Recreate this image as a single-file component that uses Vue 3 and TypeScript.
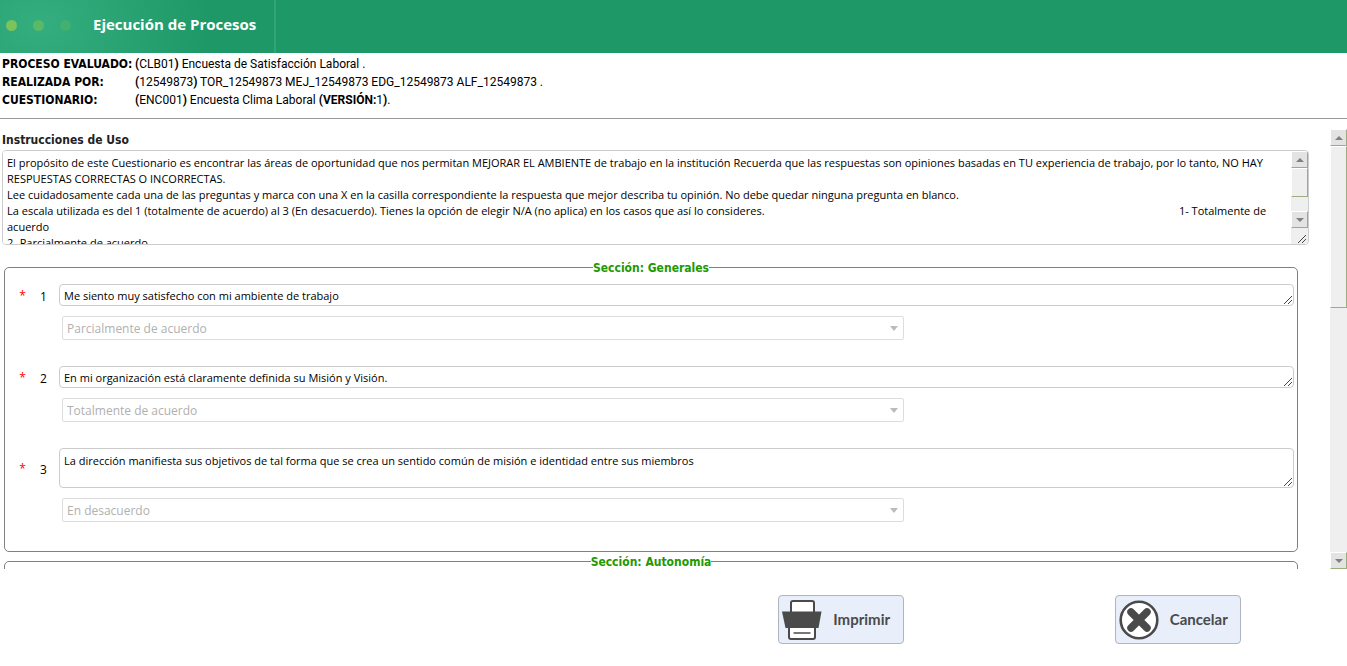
<script setup lang="ts">
import { ref } from 'vue'

interface Question {
  id: number
  text: string
  answer: string
  tall?: boolean
}

const options: string[] = ['Totalmente de acuerdo', 'Parcialmente de acuerdo', 'En desacuerdo', 'N/A']

const instructions: string =
  'El propósito de este Cuestionario es encontrar las áreas de oportunidad que nos permitan MEJORAR EL AMBIENTE de trabajo en la institución Recuerda que las respuestas son opiniones basadas en TU experiencia de trabajo, por lo tanto, NO HAY RESPUESTAS CORRECTAS O INCORRECTAS.\n' +
  'Lee cuidadosamente cada una de las preguntas y marca con una X en la casilla correspondiente la respuesta que mejor describa tu opinión. No debe quedar ninguna pregunta en blanco.\n' +
  'La escala utilizada es del 1 (totalmente de acuerdo) al 3 (En desacuerdo). Tienes la opción de elegir N/A (no aplica) en los casos que así lo consideres.' +
  ' '.repeat(145) +
  '1- Totalmente de acuerdo\n2- Parcialmente de acuerdo\n3- En desacuerdo'

const questions = ref<Question[]>([
  { id: 1, text: 'Me siento muy satisfecho con mi ambiente de trabajo', answer: 'Parcialmente de acuerdo' },
  { id: 2, text: 'En mi organización está claramente definida su Misión y Visión.', answer: 'Totalmente de acuerdo' },
  {
    id: 3,
    text: 'La dirección manifiesta sus objetivos de tal forma que se crea un sentido común de misión e identidad entre sus miembros',
    answer: 'En desacuerdo',
    tall: true,
  },
])
</script>

<template>
  <div class="page">
    <header class="banner">
      <div class="banner-title">
        <span class="dot"></span>
        <span class="dot dim"></span>
        <span class="dot faint"></span>
        <h1>Ejecución de Procesos</h1>
      </div>
    </header>

    <table class="info">
      <tbody>
        <tr>
          <th scope="row">PROCESO EVALUADO:</th>
          <td><b>(</b>CLB01<b>)</b> Encuesta de Satisfacción Laboral .</td>
        </tr>
        <tr>
          <th scope="row">REALIZADA POR:</th>
          <td><b>(</b>12549873<b>)</b> TOR_12549873 MEJ_12549873 EDG_12549873 ALF_12549873 .</td>
        </tr>
        <tr>
          <th scope="row">CUESTIONARIO:</th>
          <td><b>(</b>ENC001<b>)</b> Encuesta Clima Laboral <b>(VERSIÓN:</b>1<b>)</b>.</td>
        </tr>
      </tbody>
    </table>
    <hr class="rule" />

    <main class="survey">
      <div class="content">
        <label class="heading" for="instructions">Instrucciones de Uso</label>
        <div class="instructions">
          <textarea id="instructions" readonly :value="instructions"></textarea>
          <div class="scrollbar" aria-hidden="true">
            <span class="arrow"><svg viewBox="0 0 8 4"><path d="M0 4 4 0l4 4z" /></svg></span>
            <span class="track"><span class="thumb inner-thumb"></span></span>
            <span class="arrow"><svg viewBox="0 0 8 4"><path d="M0 0h8L4 4z" /></svg></span>
            <svg class="grip" viewBox="0 0 16 16"><path d="M7 15l8-8M11 15l4-4" /></svg>
          </div>
        </div>

        <fieldset class="section">
          <legend>Sección: Generales</legend>
          <div v-for="q in questions" :key="q.id" class="question">
            <span class="required">*</span>
            <label class="number" :for="'question-' + q.id">{{ q.id }}</label>
            <div class="field">
              <textarea :id="'question-' + q.id" :class="{ tall: q.tall }" readonly :value="q.text"></textarea>
              <svg class="grip" viewBox="0 0 16 16"><path d="M7 15l8-8M11 15l4-4" /></svg>
            </div>
            <div class="answer">
              <select v-model="q.answer" :aria-label="'Respuesta ' + q.id" disabled>
                <option v-for="o in options" :key="o">{{ o }}</option>
              </select>
              <svg class="caret" viewBox="0 0 8 5"><path d="M0 0h8L4 5z" /></svg>
            </div>
          </div>
        </fieldset>

        <fieldset class="section">
          <legend>Sección: Autonomía</legend>
        </fieldset>
      </div>

      <div class="scrollbar" aria-hidden="true">
        <span class="arrow"><svg viewBox="0 0 8 4"><path d="M0 4 4 0l4 4z" /></svg></span>
        <span class="track"><span class="thumb outer-thumb"></span></span>
        <span class="arrow"><svg viewBox="0 0 8 4"><path d="M0 0h8L4 4z" /></svg></span>
      </div>
    </main>

    <footer class="actions">
      <button type="button" class="print">
        <svg viewBox="0 0 40 40">
          <rect x="9" y="1" width="23" height="16" rx="2" fill="#fff" stroke="#4a4a4a" stroke-width="2" />
          <path d="M7 26h26v11a2 2 0 0 1-2 2H9a2 2 0 0 1-2-2z" fill="#fff" stroke="#4a4a4a" stroke-width="2" />
          <path d="M0 11.500h39.500l-3 16.500H3.500z" fill="#4a4a4a" />
          <path d="M11.500 33h17" stroke="#4a4a4a" stroke-width="1.500" />
        </svg>
        <span>Imprimir</span>
      </button>
      <button type="button" class="cancel">
        <svg viewBox="0 0 40 40">
          <circle cx="20" cy="20" r="18.300" fill="#fff" stroke="#4a4a4a" stroke-width="2.600" />
          <path d="M12 12l16 16M28 12L12 28" stroke="#4a4a4a" stroke-width="7.500" stroke-linecap="round" />
        </svg>
        <span>Cancelar</span>
      </button>
    </footer>
  </div>
</template>

<style>
body {
  margin: 0;
  background: #fff;
}
</style>

<style scoped>
.page {
  display: flex;
  flex-direction: column;
  min-height: 100vh;
  font-family: 'Open Sans', 'Noto Sans', sans-serif;
  font-size: 12px;
  color: #000;
}
.page * {
  box-sizing: border-box;
}

.banner {
  flex: none;
  background: #1f9868;
}
.banner-title {
  display: flex;
  align-items: center;
  gap: 16px;
  width: 276px;
  height: 53px;
  padding: 0 0 2px 6px;
  border-right: 2px solid #31a478;
  background: radial-gradient(ellipse 170px 130px at 40px 24px, #35ae7f, #1f9868);
}
.dot {
  width: 11px;
  height: 11px;
  border-radius: 50%;
  background: #7cc35a;
}
.dim {
  background: #58b969;
}
.faint {
  background: #41b070;
}
h1 {
  margin: 0 0 4px 6px;
  font-size: 15px;
  line-height: 20px;
  font-weight: 700;
  color: #fff;
  white-space: nowrap;
}

.info {
  flex: none;
  align-self: flex-start;
  margin-top: 2px;
  border-collapse: collapse;
  font-size: 12px;
  line-height: 18px;
}
.info th {
  width: 135px;
  padding: 0 0 0 2px;
  font-family: 'DejaVu Sans Condensed', 'DejaVu Sans', sans-serif;
  text-align: left;
  white-space: nowrap;
}
.info td {
  padding: 0;
  font-family: Roboto, sans-serif;
}
.rule {
  flex: none;
  width: 100%;
  margin: 9px 0 10px;
  border: 0;
  border-top: 1px solid #999;
}

.survey {
  flex: none;
  display: flex;
  height: 440px;
}
.content {
  flex: 1;
  min-width: 0;
  overflow: hidden;
}
.heading {
  display: block;
  padding: 2px 0 1px 2px;
  font-family: 'DejaVu Sans Condensed', 'DejaVu Sans', sans-serif;
  font-weight: 700;
  line-height: 18px;
  color: #222;
}
.instructions {
  display: flex;
  height: 95px;
  margin: 0 21px 13px 2px;
  border: 1px solid #ccc;
  border-radius: 4px;
  overflow: hidden;
}
textarea {
  display: block;
  border: 0;
  margin: 0;
  padding: 4px;
  background: #fff;
  font-family: inherit;
  font-size: 11px;
  line-height: 16px;
  color: #000;
  resize: none;
  outline: 0;
  overflow: hidden;
}
.instructions textarea {
  flex: 1;
  min-width: 0;
}

.scrollbar {
  flex: none;
  display: flex;
  flex-direction: column;
  width: 17px;
  background: #efefef;
}
.arrow {
  flex: none;
  display: flex;
  align-items: center;
  justify-content: center;
  height: 17px;
  border: 1px solid #fff;
  border-right-color: #9cab80;
  border-bottom-color: #9cab80;
  background: #e3e3e3;
}
.arrow svg {
  width: 8px;
  height: 4px;
  fill: #808080;
}
.track {
  flex: 1;
}
.thumb {
  display: block;
  border: 1px solid #fff;
  border-right-color: #9cab80;
  border-bottom-color: #9cab80;
}
.inner-thumb {
  height: 68%;
}
.outer-thumb {
  height: 40%;
}
.grip {
  display: block;
  width: 16px;
  height: 16px;
  fill: none;
  stroke: #444;
  stroke-width: 1;
}

.section {
  min-width: 0;
  margin: 0 32px 0 4px;
  padding: 7px 3px 3px;
  border: 1px solid #808080;
  border-radius: 5px;
}
.section legend {
  margin: 0 auto;
  padding: 2px 0 0;
  font-family: 'DejaVu Sans Condensed', 'DejaVu Sans', sans-serif;
  font-size: 12px;
  line-height: 17px;
  font-weight: 700;
  color: #229900;
}
.question {
  display: grid;
  grid-template-columns: 28px 23px 1fr;
  row-gap: 10px;
  align-items: center;
  padding-bottom: 26px;
}
.required {
  padding-left: 1px;
  text-align: center;
  color: #f00;
}
.number {
  padding: 2px 0 0 4px;
}
.field {
  position: relative;
}
.field textarea {
  width: 100%;
  height: 22px;
  padding: 3px 4px;
  border: 1px solid #ccc;
  border-radius: 4px;
}
.field textarea.tall {
  height: 40px;
  padding-top: 4px;
}
.field .grip {
  position: absolute;
  right: 1px;
  bottom: 1px;
}
.answer {
  grid-column: 3;
  position: relative;
  width: 68.2%;
  margin-left: 3px;
}
select {
  display: block;
  width: 100%;
  height: 24px;
  padding: 0 4px;
  border: 1px solid #ddd;
  border-radius: 2px;
  background: #fff;
  font-family: inherit;
  font-size: 12px;
  color: #b0b0b0;
  opacity: 1;
  appearance: none;
}
.caret {
  position: absolute;
  right: 6px;
  top: 10px;
  width: 8px;
  height: 5px;
  fill: #bbb;
}

.actions {
  display: grid;
  grid-template-columns: repeat(4, 1fr);
  justify-items: center;
  padding: 26px 1px 0 0;
}
.actions button {
  display: flex;
  align-items: center;
  gap: 11px;
  width: 126px;
  height: 49px;
  padding: 0 3px;
  border: 1px solid #b0b4bc;
  border-radius: 4px;
  background: #e8eefa;
  font-family: Lato, sans-serif;
  font-size: 15px;
  line-height: 18px;
  font-weight: 700;
  color: #4a4a4a;
}
.actions span {
  padding-bottom: 2px;
}
.actions svg {
  flex: none;
  width: 40px;
  height: 40px;
  fill: none;
}
.print {
  grid-column: 3;
}
.cancel {
  grid-column: 4;
}
</style>
